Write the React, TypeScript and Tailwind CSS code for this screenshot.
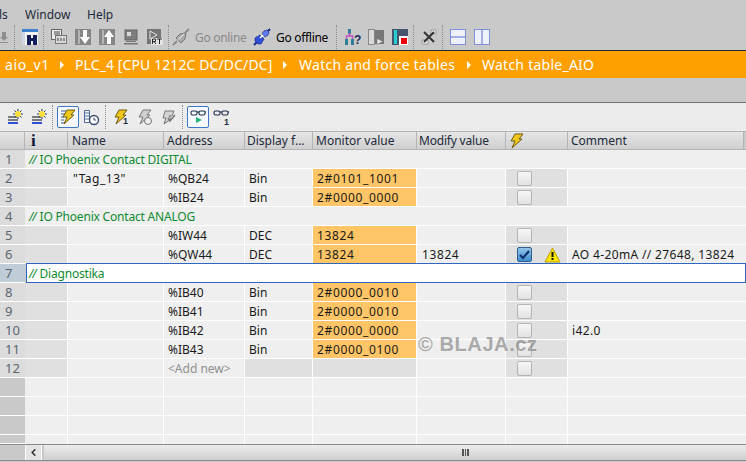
import type { ReactNode } from 'react';
import { ChevronLeft } from 'lucide-react';

const font = "font-['Noto_Sans','Open_Sans',sans-serif]";

const Sep = ({ className = '' }: { className?: string }) => (
  <div className={`h-[24px] w-px shrink-0 border-l border-dotted border-[#8a8a8a] ${className}`} />
);

function Glasses() {
  return (
    <g fill="none" stroke="#1d2d44" strokeWidth="1.1">
      <rect x="1" y="2" width="6" height="4" rx="1.5" />
      <rect x="9" y="2" width="6" height="4" rx="1.5" />
      <path d="M7 3h2M15 3h1" />
    </g>
  );
}

function Bolt({ color = '#f0c81c', dark = '#6b5a10' }: { color?: string; dark?: string }) {
  return <path d="M7 1h8l-4 5h3L4 15l3-7H3z" fill={color} stroke={dark} strokeWidth="1" />;
}

function Icon({ children, w = 16, h = 16, className = '' }: { children: ReactNode; w?: number; h?: number; className?: string }) {
  return (
    <svg width={w} height={h} viewBox={`0 0 ${w} ${h}`} className={`shrink-0 overflow-visible ${className}`}>
      {children}
    </svg>
  );
}

const PlugOff = () => (
  <Icon>
    <path d="M0 16l4-4M12 4l4-4" stroke="#8a8a8a" strokeWidth="1.8" />
    <path d="M3 9l4-4 5-1 1 1-1 5-4 4z" fill="#a8a8a8" stroke="#7a7a7a" />
    <path d="M5 11l6-6" stroke="#d4d4d4" strokeWidth="1.4" />
  </Icon>
);

const PlugOn = () => (
  <Icon>
    <path d="M0 16l3-3M13 3l3-3" stroke="#1a2c8a" strokeWidth="2" />
    <path d="M1 9l5-3 4 4-3 5-3 0-3-3z" fill="#2f4fd8" stroke="#1a2c8a" strokeWidth=".7" />
    <path d="M8 5l2-3 3-1 2 2-1 3-3 2z" fill="#5f7df0" stroke="#1a2c8a" strokeWidth=".7" />
    <path d="M6 9l3-3" stroke="#fff" strokeWidth="1.6" />
  </Icon>
);

const PanelBtn = ({ children }: { children: ReactNode }) => (
  <Icon>
    <rect width="16" height="16" fill="#868686" />
    <rect x="3" y="1" width="2" height="14" fill="#b5b5b5" />
    {children}
  </Icon>
);

function TopToolbar() {
  return (
    <div className={`flex h-[26px] items-center text-[12px] ${font}`}>
      <Icon w={8} h={12}>
        <path d="M2 1h4v5h2L4 10 0 6h2zM0 11h8v1H0z" fill="#8f8f8f" />
      </Icon>
      <Sep className="ml-[6px] mr-[7px]" />
      <Icon>
        <rect width="16" height="16" fill="#f2f2f2" />
        <rect width="16" height="3" fill="#3f7fd0" />
        <rect x="0" y="3" width="3" height="13" fill="#cfd6e6" />
        <path d="M5 6h4v10H5zM11 6h4v10h-4zM8 9h4v3H8z" fill="#141f5c" />
      </Icon>
      <Sep className="ml-[5px] mr-[7px]" />
      <div className="flex items-center gap-[8px]">
        <Icon>
          <rect x=".5" y=".5" width="10" height="10" fill="#ececec" stroke="#666" />
          <rect x="4.5" y="6.5" width="11" height="8" fill="#d8d8d8" stroke="#777" />
          <path d="M3 3h6M3 5h6M7 9v3M10 9v3M13 9v3" stroke="#444" />
        </Icon>
        <PanelBtn>
          <path d="M8 1h4v7h3l-5 7-5-7h3z" fill="#fff" />
        </PanelBtn>
        <PanelBtn>
          <path d="M8 15V8H5l5-7 5 7h-3v7z" fill="#fff" />
        </PanelBtn>
        <Icon>
          <rect x="2" y="1" width="12" height="10" fill="#7d7d7d" stroke="#666" />
          <rect x="4" y="3" width="4" height="4" fill="#d8d8d8" />
          <path d="M3 12h10v1H3zM1 14h14v1.5H1z" fill="#777" />
        </Icon>
        <Icon>
          <rect width="14" height="15" fill="#757575" />
          <path d="M3 2l7 4-7 4z" fill="none" stroke="#e4e4e4" />
          <rect x="4" y="9" width="12" height="7" fill="#e4e4e4" />
          <path d="M5.5 15v-5h3v2.5h-3M7 12.5l2 2.5M10 10h5M12.5 10v5" stroke="#222" fill="none" />
        </Icon>
      </div>
      <Sep className="ml-[5px] mr-[4px]" />
      <PlugOff />
      <span className="ml-[6px] w-[51px] whitespace-nowrap pt-px tracking-[-0.3px] text-[#8a8a8a]">Go online</span>
      <div className="ml-[8px]">
        <PlugOn />
      </div>
      <span className="ml-[6px] w-[52px] whitespace-nowrap pt-px tracking-[-0.3px] text-black">Go offline</span>
      <Sep className="ml-[8px] mr-[7px]" />
      <Icon w={17}>
        <path d="M4 0h3v5H4zM1 10h3v6H1zM7 10h3v6H7z" fill="#2f7f96" />
        <path d="M5.5 4v3M2.5 10V7h6v3" stroke="#c04fc0" fill="none" strokeWidth="1.5" />
        <text x="10" y="15" fontSize="12" fontWeight="700" fill="#1a2a60" fontFamily="Liberation Sans, sans-serif">?</text>
      </Icon>
      <div className="ml-[7px]">
        <Icon>
          <rect x=".5" y=".5" width="6" height="15" fill="#d8d8d8" stroke="#888" />
          <rect x="7" y="1" width="9" height="14" fill="#777" />
          <path d="M9 9.5l6 3-6 3z" fill="#e8e8e8" stroke="#666" strokeWidth=".5" />
        </Icon>
      </div>
      <div className="ml-[8px]">
        <Icon>
          <rect width="16" height="16" fill="#46556c" />
          <rect x="2" y="1" width="3" height="14" fill="#27d0d0" />
          <rect x="7" y="7" width="9" height="9" fill="#fff" />
          <rect x="9" y="9" width="6" height="6" fill="#ee0000" />
        </Icon>
      </div>
      <Sep className="ml-[5px] mr-[7px]" />
      <Icon>
        <path d="M1 11h6v4H1zM10 1h5v4h-5z" fill="#ececec" stroke="#999" />
        <path d="M3 3l10 10M13 3L3 13" stroke="#333" strokeWidth="2" />
      </Icon>
      <Sep className="ml-[5px] mr-[7px]" />
      <div className="flex items-center gap-[8px]">
        <Icon>
          <rect x=".5" y=".5" width="15" height="15" fill="#eef0fb" stroke="#7f8fd8" />
          <path d="M1 8h14" stroke="#5a6cc8" />
        </Icon>
        <Icon>
          <rect x=".5" y=".5" width="15" height="15" fill="#eef0fb" stroke="#7f8fd8" />
          <path d="M8 1v14" stroke="#5a6cc8" />
        </Icon>
      </div>
    </div>
  );
}

const ToggleBox = ({ children }: { children: ReactNode }) => (
  <div className="flex h-[22px] w-[22px] shrink-0 items-center justify-center rounded-[2px] border border-[#3f77c4] bg-[#f6f9fd]">
    {children}
  </div>
);

const NewRowIcon = () => (
  <Icon>
    <path d="M1 8h9M1 11h10" stroke="#7a7a7a" strokeWidth="2" />
    <path d="M1 14h10" stroke="#2f4fd8" strokeWidth="2" />
    <path d="M11 0v10M6 5h10M7.5 1.5l7 7M14.5 1.5l-7 7" stroke="#1d3a70" strokeWidth="1" />
    <circle cx="11" cy="5" r="3" fill="#ffe03a" />
  </Icon>
);

function TableToolbar() {
  return (
    <div className="flex h-[28px] items-center bg-[#ececec] pl-[7px]">
      <NewRowIcon />
      <div className="ml-[8px]">
        <NewRowIcon />
      </div>
      <Sep className="ml-[5px] mr-[4px]" />
      <ToggleBox>
        <Icon>
          <path d="M1 2h5M1 5h4M1 8h3M1 11h3M1 14h4" stroke="#3e5a90" />
          <Bolt />
        </Icon>
      </ToggleBox>
      <div className="ml-[4px]">
        <Icon>
          <path d="M1.5 1.5h5v12h-5z" fill="#fff" stroke="#4a6aa0" />
          <path d="M2 4h4M2 7h4M2 10h4" stroke="#4a6aa0" />
          <circle cx="11" cy="11" r="4.5" fill="#fff" stroke="#3a4a70" strokeWidth="1.4" />
          <path d="M11 8.5V11h2" stroke="#3a4a70" fill="none" />
        </Icon>
      </div>
      <Sep className="ml-[6px] mr-[6px]" />
      <div className="flex items-center gap-[8px]">
        <Icon>
          <Bolt />
          <text x="11" y="15" fontSize="9" fontWeight="700" fill="#1d2d44" fontFamily="Liberation Sans, sans-serif">1</text>
        </Icon>
        <Icon>
          <Bolt color="#cfcfcf" dark="#777" />
          <circle cx="12" cy="12" r="3.5" fill="#eee" stroke="#777" />
        </Icon>
        <Icon>
          <path d="M5 2h9l-2 5h-3l2 3-7 5 2-6H3z" fill="#d4d4d4" stroke="#777" />
          <path d="M8 9l2 3 5-6" fill="none" stroke="#777" strokeWidth="1.6" />
        </Icon>
      </div>
      <Sep className="ml-[6px] mr-[4px]" />
      <ToggleBox>
        <Icon>
          <Glasses />
          <path d="M6 8l6 3-6 3z" fill="#22b573" />
        </Icon>
      </ToggleBox>
      <div className="ml-[4px]">
        <Icon w={17}>
          <Glasses />
          <text x="11" y="16" fontSize="9" fontWeight="700" fill="#1d2d44" fontFamily="Liberation Sans, sans-serif">1</text>
        </Icon>
      </div>
    </div>
  );
}

const cols = 'grid grid-cols-[25px_43px_96px_81px_68px_104px_89px_62px_1fr]';

function HeaderCell({ children, className = 'pl-[4px]' }: { children?: ReactNode; className?: string }) {
  return (
    <div className={`flex items-center border-r border-[#b4b4b4] bg-gradient-to-b from-[#e6e6e6] to-[#cfcfcf] text-[#1c2a3c] ${className}`}>
      {children}
    </div>
  );
}

function Check({ checked }: { checked?: boolean }) {
  if (checked) {
    return (
      <div className="flex h-[15px] w-[15px] shrink-0 items-center justify-center rounded-[2px] border border-[#2f5f8f] bg-gradient-to-b from-[#8fc4ea] to-[#3f8fd0]">
        <svg width="11" height="10" viewBox="0 0 11 10">
          <path d="M1 5l3 3 6-7" fill="none" stroke="#10306a" strokeWidth="2.2" />
        </svg>
      </div>
    );
  }
  return <div className="h-[15px] w-[15px] shrink-0 rounded-[2px] border border-[#b4b4b4] bg-gradient-to-b from-[#f7f7f7] to-[#e2e2e2]" />;
}

type Row = {
  n: number;
  name?: string;
  address?: string;
  format?: string;
  monitor?: string;
  modify?: string;
  checked?: boolean;
  warn?: boolean;
  comment?: string;
};

const rows: (Row | { n: number; section: string; active?: boolean })[] = [
  { n: 1, section: 'IO Phoenix Contact DIGITAL' },
  { n: 2, name: '"Tag_13"', address: '%QB24', format: 'Bin', monitor: '2#0101_1001' },
  { n: 3, address: '%IB24', format: 'Bin', monitor: '2#0000_0000' },
  { n: 4, section: 'IO Phoenix Contact ANALOG' },
  { n: 5, address: '%IW44', format: 'DEC', monitor: '13824' },
  { n: 6, address: '%QW44', format: 'DEC', monitor: '13824', modify: '13824', checked: true, warn: true, comment: 'AO 4-20mA // 27648, 13824' },
  { n: 7, section: 'Diagnostika', active: true },
  { n: 8, address: '%IB40', format: 'Bin', monitor: '2#0000_0010' },
  { n: 9, address: '%IB41', format: 'Bin', monitor: '2#0000_0010' },
  { n: 10, address: '%IB42', format: 'Bin', monitor: '2#0000_0000', comment: 'i42.0' },
  { n: 11, address: '%IB43', format: 'Bin', monitor: '2#0000_0100' },
];

const Cell = ({ children, bg = 'bg-[#efefef]', className = '' }: { children?: ReactNode; bg?: string; className?: string }) => (
  <div className={`flex items-center whitespace-nowrap border-r border-b border-white pl-[4px] pt-px ${bg} ${className}`}>{children}</div>
);

const RowNo = ({ n, active }: { n?: number; active?: boolean }) => (
  <div className={`flex items-center border-b border-white pl-[5px] pt-px text-[13px] text-[#5a6570] ${active ? 'bg-[#c0cdd9]' : n ? 'bg-[#dcdcdc]' : 'bg-[#c9c9c9]'}`}>
    {n}
  </div>
);

const Slashes = () => <span className="mr-[4px] italic tracking-[-1px]">//</span>;

function TableRow({ row }: { row: (typeof rows)[number] }) {
  if ('section' in row) {
    return (
      <div className={`${cols} h-[19px]`}>
        <RowNo n={row.n} active={row.active} />
        {row.active ? (
          <div className="col-span-8 -mt-px ml-px flex items-center border border-[#2f67c0] bg-white pl-[2px] pt-px tracking-[-0.2px] text-[#108a30]">
            <Slashes />
            {row.section}
          </div>
        ) : (
          <div className="col-span-8 flex items-center border-b border-white bg-[#efefef] pl-[4px] pt-px tracking-[-0.2px] text-[#108a30]">
            <Slashes />
            {row.section}
          </div>
        )}
      </div>
    );
  }
  return (
    <div className={`${cols} h-[19px]`}>
      <RowNo n={row.n} />
      <Cell bg="bg-[#e0e0e0]" />
      <Cell className="pl-[5px] tracking-[0.5px]">{row.name}</Cell>
      <Cell>{row.address}</Cell>
      <Cell>{row.format}</Cell>
      <Cell bg="bg-[#ffc566]" className="tracking-[0.65px]">
        {row.monitor}
      </Cell>
      <Cell className="pl-[5px] tracking-[0.6px]">{row.modify}</Cell>
      <Cell bg="bg-[#e0e0e0]" className="pl-[11px]">
        <Check checked={row.checked} />
        {row.warn && (
          <svg width="17" height="16" viewBox="0 0 17 16" className="ml-[12px] shrink-0">
            <path d="M8.5 1l7.5 14H1z" fill="#ffe600" stroke="#b8a000" />
            <path d="M7.5 5h2v5h-2zM7.5 11h2v2h-2z" fill="#111" />
          </svg>
        )}
      </Cell>
      <Cell className="border-r-0 tracking-[0.36px]">{row.comment}</Cell>
    </div>
  );
}

function AddNewRow() {
  return (
    <div className={`${cols} h-[19px]`}>
      <RowNo n={12} />
      <Cell bg="bg-[#e0e0e0]" />
      <Cell />
      <Cell className="text-[#8f8f8f]">&lt;Add new&gt;</Cell>
      <Cell bg="bg-[#e0e0e0]" />
      <Cell bg="bg-[#e0e0e0]" />
      <Cell />
      <Cell bg="bg-[#e0e0e0]" className="pl-[11px]">
        <Check />
      </Cell>
      <Cell className="border-r-0" />
    </div>
  );
}

const EmptyRow = ({ short }: { short?: boolean }) => (
  <div className={`${cols} ${short ? 'h-[9px]' : 'h-[19px]'}`}>
    <RowNo />
    {Array.from({ length: 8 }).map((_, i) => (
      <Cell key={i} className={`${i === 7 ? 'border-r-0' : ''} ${short ? 'border-b-0' : ''}`} />
    ))}
  </div>
);

const Triangle = ({ className }: { className: string }) => (
  <span className={`h-0 w-0 shrink-0 border-y-[4px] border-l-[4px] border-y-transparent border-l-white ${className}`} />
);

export default function App() {
  return (
    <div className={`relative h-[462px] w-[746px] overflow-hidden bg-[#c9c9c9] text-[12px] leading-none text-[#1a1a1a] ${font}`}>
      <div className="flex h-[24px] items-center pt-[5px] text-[12px] text-[#1c2a3c]">
        <span className="ml-[-1px] w-[26px]">ls</span>
        <span className="w-[62px]">Window</span>
        <span>Help</span>
      </div>
      <TopToolbar />
      <div className="flex h-[28px] items-center whitespace-nowrap border-t border-[#1d2b3a] bg-[#ffa000] pl-[5px] text-[14px] text-white">
        <span className="w-[45px] tracking-[0.6px]">aio_v1</span>
        <Triangle className="ml-[10px] mr-[11px]" />
        <span className="w-[197px] tracking-[0.1px]">PLC_4 [CPU 1212C DC/DC/DC]</span>
        <Triangle className="ml-[11px] mr-[12px]" />
        <span className="w-[156px] tracking-[0.27px]">Watch and force tables</span>
        <Triangle className="ml-[12px] mr-[11px]" />
        <span className="tracking-[0.25px]">Watch table_AIO</span>
      </div>
      <div className="h-[25px] border-b border-[#707070]" />
      <TableToolbar />
      <div className={`${cols} h-[19px] border-y border-[#b4b4b4] pr-[2px]`}>
        <HeaderCell />
        <HeaderCell className="pl-[6px]">
          <span className="font-['Liberation_Serif',serif] text-[17px] font-bold text-[#111a3a]">i</span>
        </HeaderCell>
        <HeaderCell>Name</HeaderCell>
        <HeaderCell className="pl-[3px]">Address</HeaderCell>
        <HeaderCell className="pl-[2px]">Display f...</HeaderCell>
        <HeaderCell className="pl-[3px]">Monitor value</HeaderCell>
        <HeaderCell className="pl-[2px] tracking-[-0.2px]">Modify value</HeaderCell>
        <HeaderCell className="pl-[2px]">
          <Icon>
            <Bolt />
          </Icon>
        </HeaderCell>
        <HeaderCell className="pl-[3px]">Comment</HeaderCell>
      </div>
      {rows.map((r) => (
        <TableRow key={r.n} row={r} />
      ))}
      <AddNewRow />
      <EmptyRow />
      <EmptyRow />
      <EmptyRow />
      <EmptyRow short />
      <div className="flex h-[17px] items-stretch border-y border-[#8a8a8a] bg-[#c9c9c9]">
        <div className="w-[25px]" />
        <div className="flex w-[17px] items-center justify-center border-x border-white bg-[#e4e4e4]">
          <ChevronLeft size={11} strokeWidth={3.5} className="text-[#333]" />
        </div>
        <div className="ml-[2px] flex flex-1 items-center justify-center bg-gradient-to-b from-[#ececec] to-[#cfcfcf] pl-[140px]">
          <div className="h-[7px] w-[7px] border-x border-[#555] bg-[repeating-linear-gradient(90deg,#555_0,#555_1px,transparent_1px,transparent_2px)]" />
        </div>
      </div>
      <div className="absolute left-[418px] top-[334px] whitespace-nowrap font-['Liberation_Sans',sans-serif] text-[20px] font-bold tracking-[0.6px] text-[#8a8a8a]/70">
        © BLAJA.cz
      </div>
    </div>
  );
}
